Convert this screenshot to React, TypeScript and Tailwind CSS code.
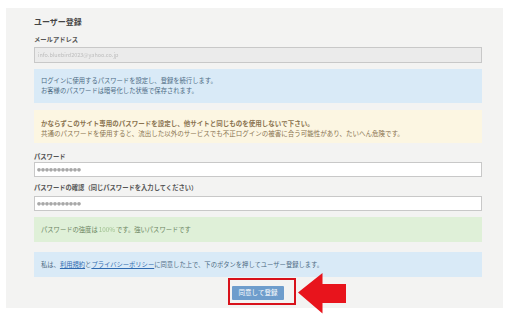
export default function App() {
  return (
    <div
      className="relative h-[316px] w-[510px] bg-white pl-[6px] pr-[7px] pt-[8px]"
      style={{ fontFamily: '"Noto Sans CJK JP", "Noto Sans", sans-serif' }}
    >
      <div className="h-[300px] bg-[#f3f3f2] pl-[28px] pr-[21px] pt-[9px]">
        {/* タイトル */}
        <h2 className="h-[10px] text-[8px] font-bold leading-[10px] text-[#444]">ユーザー登録</h2>

        <label className="mt-[8px] block h-[10px] text-[6.3px] font-bold leading-[10px] text-[#555]">
          メールアドレス
        </label>
        <div className="mt-[2px] flex h-[16px] items-center border border-[#c8c8c8] bg-[#ebebeb] px-[3px]">
          <span className="text-[5.5px] text-[#bdbdbd] blur-[0.7px]">info.bluebird2023@yahoo.co.jp</span>
        </div>

        <div className="mt-[6px] h-[34px] bg-[#d9eaf7] pl-[7px] pt-[7px] text-[6.3px] leading-[10px] text-[#4d6a84]">
          <p>ログインに使用するパスワードを設定し、登録を続行します。</p>
          <p>お客様のパスワードは暗号化した状態で保存されます。</p>
        </div>

        <div className="mt-[7px] h-[33px] bg-[#fcf6e2] pl-[7px] pt-[9px] text-[6.5px] leading-[9.5px] text-[#8a7350]">
          <p className="font-bold">かならずこのサイト専用のパスワードを設定し、他サイトと同じものを使用しないで下さい。</p>
          <p>共通のパスワードを使用すると、流出した以外のサービスでも不正ログインの被害に合う可能性があり、たいへん危険です。</p>
        </div>

        <label className="mt-[9px] block h-[10px] text-[6.3px] font-bold leading-[10px] text-[#555]">パスワード</label>
        <div className="flex h-[15px] items-center border border-[#c8c8c8] bg-white px-[2px]">
          <span className="text-[4px] text-[#a8a8a8] blur-[0.6px]">●●●●●●●●●●●</span>
        </div>

        <label className="mt-[6px] block h-[10px] text-[6.3px] font-bold leading-[10px] text-[#555]">
          パスワードの確認（同じパスワードを入力してください）
        </label>
        <div className="mt-[3px] flex h-[15px] items-center border border-[#c8c8c8] bg-white px-[2px]">
          <span className="text-[4px] text-[#a8a8a8] blur-[0.6px]">●●●●●●●●●●●</span>
        </div>

        <div className="mt-[6px] flex h-[25px] items-center bg-[#dff0d8] pl-[7px] text-[6.3px] text-[#6a8460]">
          パスワードの強度は <span className="mx-[1px] text-[#9dbf8d] blur-[0.3px]">100%</span> です。強いパスワードです
        </div>

        <div className="mt-[10px] flex h-[25px] items-center bg-[#d9eaf7] pl-[7px] text-[6.3px] text-[#4d6a84]">
          私は、
          <a className="text-[#2f6ab0] underline">利用規約</a>と
          <a className="text-[#2f6ab0] underline">プライバシーポリシー</a>
          に同意した上で、下のボタンを押してユーザー登録します。
        </div>

        <div className="mt-[9px] flex justify-center">
          <div className="relative">
            <button className="flex h-[14px] w-[52px] items-center justify-center rounded-[1px] bg-[#6e9dcc] text-[6.5px] text-white">
              同意して登録
            </button>
            {/* 注釈の赤枠 */}
            <div className="absolute left-[-4px] top-[-8px] h-[27px] w-[68px] border-2 border-[#d8121b]" />
          </div>
        </div>
      </div>

      {/* 注釈の矢印 */}
      <svg className="absolute left-[297px] top-[272px]" width="50" height="43" viewBox="0 0 50 43">
        <polygon points="1,20.5 25.5,1 25.5,12 49,12 49,31 25.5,31 25.5,41.5" fill="#e8141c" />
      </svg>
    </div>
  );
}
